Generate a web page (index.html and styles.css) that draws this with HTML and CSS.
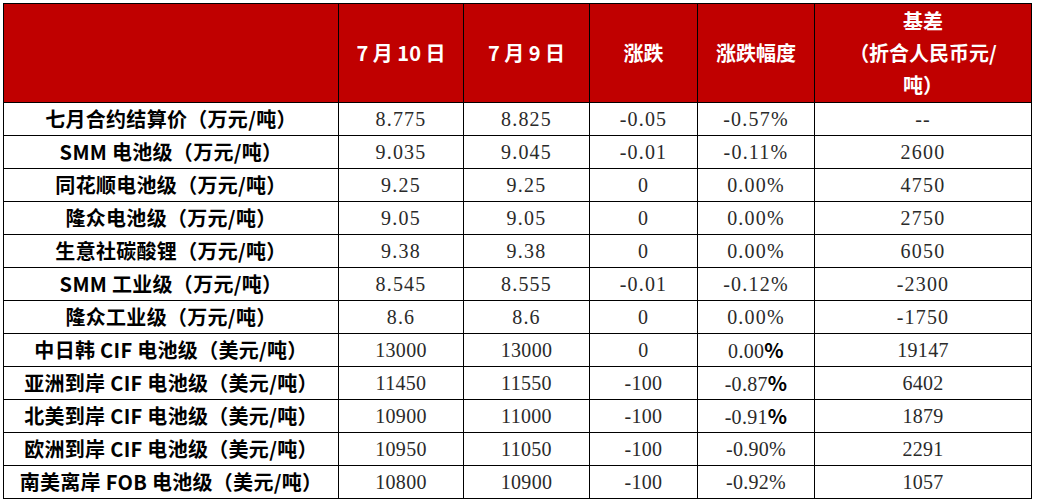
FILE: index.html
```html
<!DOCTYPE html>
<html lang="zh-CN">
<head>
<meta charset="utf-8">
<title>碳酸锂价格</title>
<link rel="stylesheet" href="styles.css">
</head>
<body>
<table class="price-table">
  <colgroup>
    <col class="c-name">
    <col class="c-d1">
    <col class="c-d2">
    <col class="c-chg">
    <col class="c-pct">
    <col class="c-basis">
  </colgroup>
  <thead>
    <tr class="head-row">
      <th></th>
      <th>7 月 10 日</th>
      <th>7 月 9 日</th>
      <th>涨跌</th>
      <th>涨跌幅度</th>
      <th>基差<br>（折合人民币元/<br>吨）</th>
    </tr>
  </thead>
  <tbody>
    <tr><td class="name">七月合约结算价（万元/吨）</td><td>8.775</td><td>8.825</td><td>-0.05</td><td>-0.57%</td><td>--</td></tr>
    <tr><td class="name">SMM 电池级（万元/吨）</td><td>9.035</td><td>9.045</td><td>-0.01</td><td>-0.11%</td><td>2600</td></tr>
    <tr><td class="name">同花顺电池级（万元/吨）</td><td>9.25</td><td>9.25</td><td>0</td><td>0.00%</td><td>4750</td></tr>
    <tr><td class="name">隆众电池级（万元/吨）</td><td>9.05</td><td>9.05</td><td>0</td><td>0.00%</td><td>2750</td></tr>
    <tr><td class="name">生意社碳酸锂（万元/吨）</td><td>9.38</td><td>9.38</td><td>0</td><td>0.00%</td><td>6050</td></tr>
    <tr><td class="name">SMM 工业级（万元/吨）</td><td>8.545</td><td>8.555</td><td>-0.01</td><td>-0.12%</td><td>-2300</td></tr>
    <tr><td class="name">隆众工业级（万元/吨）</td><td>8.6</td><td>8.6</td><td>0</td><td>0.00%</td><td>-1750</td></tr>
    <tr class="usd"><td class="name">中日韩 CIF 电池级（美元/吨）</td><td>13000</td><td>13000</td><td>0</td><td>0.00<b class="pct">%</b></td><td>19147</td></tr>
    <tr class="usd"><td class="name">亚洲到岸 CIF 电池级（美元/吨）</td><td>11450</td><td>11550</td><td>-100</td><td>-0.87<b class="pct">%</b></td><td>6402</td></tr>
    <tr class="usd"><td class="name">北美到岸 CIF 电池级（美元/吨）</td><td>10900</td><td>11000</td><td>-100</td><td>-0.91<b class="pct">%</b></td><td>1879</td></tr>
    <tr class="usd"><td class="name">欧洲到岸 CIF 电池级（美元/吨）</td><td>10950</td><td>11050</td><td>-100</td><td>-0.90%</td><td>2291</td></tr>
    <tr class="usd"><td class="name">南美离岸 FOB 电池级（美元/吨）</td><td>10800</td><td>10900</td><td>-100</td><td>-0.92%</td><td>1057</td></tr>
  </tbody>
</table>
</body>
</html>
```

FILE: styles.css
```css
html, body {
  margin: 0;
  padding: 0;
  background: #ffffff;
}

body {
  padding: 3px 0 0 3px;
}

.price-table {
  border-collapse: collapse;
  table-layout: fixed;
  width: 1028px;
  font-family: "Liberation Serif", "Noto Sans CJK SC", serif;
}

.c-name { width: 335px; }
.c-d1 { width: 125px; }
.c-d2 { width: 126px; }
.c-chg { width: 108px; }
.c-pct { width: 117px; }
.c-basis { width: 217px; }

.price-table th,
.price-table td {
  border: 1px solid #000000;
  padding: 0;
  text-align: center;
  vertical-align: middle;
  overflow: hidden;
  white-space: nowrap;
}

.head-row th {
  height: 98px;
  background: #c00000;
  color: #ffffff;
  font-family: "Noto Sans CJK SC", sans-serif;
  font-weight: 700;
  font-size: 20px;
  line-height: 32px;
}

.price-table td {
  height: 32px;
  font-size: 20px;
  line-height: 22px;
  color: #2a2a2a;
  letter-spacing: 1.2px;
}

.price-table td.name {
  font-family: "Noto Sans CJK SC", sans-serif;
  font-weight: 700;
  font-size: 20px;
  color: #000000;
  letter-spacing: 0.3px;
}

.usd td {
  letter-spacing: 0.3px;
}

.pct {
  font-family: "Noto Sans CJK SC", sans-serif;
  font-weight: 700;
  color: #000000;
}
```
